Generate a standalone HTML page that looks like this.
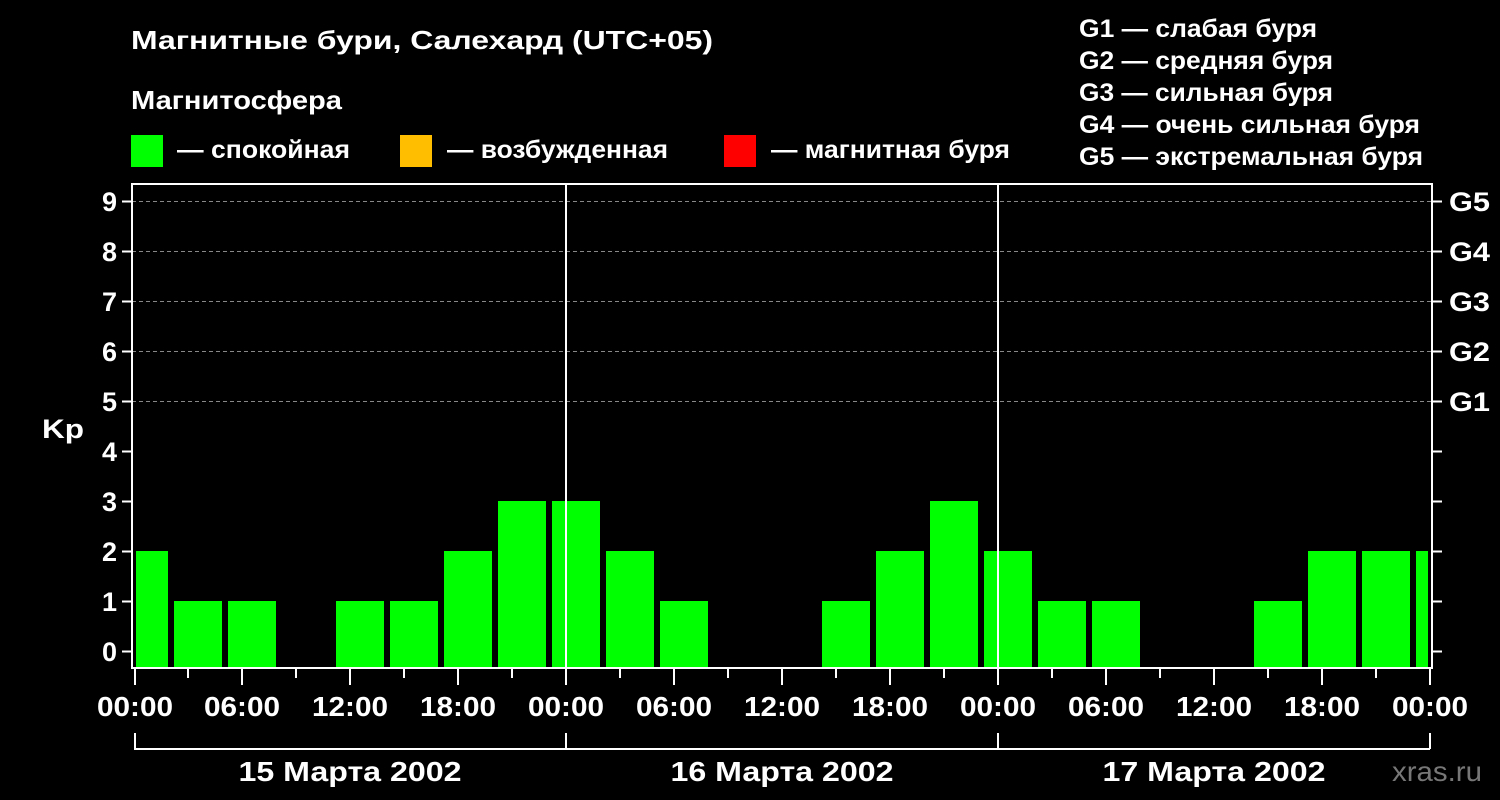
<!DOCTYPE html>
<html><head><meta charset="utf-8"><style>
html,body{margin:0;padding:0;background:#000;width:1500px;height:800px;overflow:hidden}
svg text{font-family:"Liberation Sans",Arial,sans-serif;font-weight:bold;fill:#fff}
</style></head><body>
<svg width="1500" height="800" viewBox="0 0 1500 800" xmlns="http://www.w3.org/2000/svg">
<rect width="1500" height="800" fill="#000"/>
<text x="131" y="49" font-size="26" textLength="582" lengthAdjust="spacingAndGlyphs">Магнитные бури, Салехард (UTC+05)</text>
<text x="131" y="109" font-size="26" textLength="211" lengthAdjust="spacingAndGlyphs">Магнитосфера</text>
<rect x="131" y="135" width="32" height="32" fill="#00ff00"/>
<text x="177" y="158" font-size="25" textLength="173" lengthAdjust="spacingAndGlyphs">— спокойная</text>
<rect x="400" y="135" width="32" height="32" fill="#ffbf00"/>
<text x="447" y="158" font-size="25" textLength="221" lengthAdjust="spacingAndGlyphs">— возбужденная</text>
<rect x="724" y="135" width="32" height="32" fill="#ff0000"/>
<text x="771" y="158" font-size="25" textLength="239" lengthAdjust="spacingAndGlyphs">— магнитная буря</text>
<g font-size="25">
<text x="1079" y="37" textLength="238" lengthAdjust="spacingAndGlyphs">G1 — слабая буря</text>
<text x="1079" y="69" textLength="254" lengthAdjust="spacingAndGlyphs">G2 — средняя буря</text>
<text x="1079" y="101" textLength="254" lengthAdjust="spacingAndGlyphs">G3 — сильная буря</text>
<text x="1079" y="133" textLength="341" lengthAdjust="spacingAndGlyphs">G4 — очень сильная буря</text>
<text x="1079" y="165" textLength="344" lengthAdjust="spacingAndGlyphs">G5 — экстремальная буря</text>
</g>
<g stroke="#888" stroke-width="1" stroke-dasharray="4,3">
<line x1="132" y1="201.5" x2="1432" y2="201.5"/>
<line x1="132" y1="251.5" x2="1432" y2="251.5"/>
<line x1="132" y1="301.5" x2="1432" y2="301.5"/>
<line x1="132" y1="351.5" x2="1432" y2="351.5"/>
<line x1="132" y1="401.5" x2="1432" y2="401.5"/>
</g>
<g fill="#00ff00">
<rect x="136" y="551" width="32" height="116"/>
<rect x="174" y="601" width="48" height="66"/>
<rect x="228" y="601" width="48" height="66"/>
<rect x="336" y="601" width="48" height="66"/>
<rect x="390" y="601" width="48" height="66"/>
<rect x="444" y="551" width="48" height="116"/>
<rect x="498" y="501" width="48" height="166"/>
<rect x="552" y="501" width="48" height="166"/>
<rect x="606" y="551" width="48" height="116"/>
<rect x="660" y="601" width="48" height="66"/>
<rect x="822" y="601" width="48" height="66"/>
<rect x="876" y="551" width="48" height="116"/>
<rect x="930" y="501" width="48" height="166"/>
<rect x="984" y="551" width="48" height="116"/>
<rect x="1038" y="601" width="48" height="66"/>
<rect x="1092" y="601" width="48" height="66"/>
<rect x="1254" y="601" width="48" height="66"/>
<rect x="1308" y="551" width="48" height="116"/>
<rect x="1362" y="551" width="48" height="116"/>
<rect x="1416" y="551" width="12" height="116"/>
</g>
<g stroke="#fff" stroke-width="2" fill="none">
<rect x="132" y="184" width="1300" height="484"/>
<line x1="566" y1="183" x2="566" y2="668"/>
<line x1="998" y1="183" x2="998" y2="668"/>
<path d="M122 201.5h10M122 251.5h10M122 301.5h10M122 351.5h10M122 401.5h10M122 451.5h10M122 501.5h10M122 551.5h10M122 601.5h10M122 651.5h10"/>
<path d="M1432 201.5h10M1432 251.5h10M1432 301.5h10M1432 351.5h10M1432 401.5h10M1432 451.5h10M1432 501.5h10M1432 551.5h10M1432 601.5h10M1432 651.5h10"/>
<path d="M135 669v16M188 669v9M242 669v16M296 669v9M350 669v16M404 669v9M458 669v16M512 669v9M566 669v16M620 669v9M674 669v16M728 669v9M782 669v16M836 669v9M890 669v16M944 669v9M998 669v16M1052 669v9M1106 669v16M1160 669v9M1214 669v16M1268 669v9M1322 669v16M1376 669v9M1430 669v16"/>
<path d="M135 733v16H1430M1430 733v16M566 733v16M998 733v16"/>
</g>
<g font-size="27" text-anchor="end">
<text x="117" y="211">9</text><text x="117" y="261">8</text><text x="117" y="311">7</text>
<text x="117" y="361">6</text><text x="117" y="411">5</text><text x="117" y="461">4</text>
<text x="117" y="511">3</text><text x="117" y="561">2</text><text x="117" y="611">1</text>
<text x="117" y="661">0</text>
</g>
<text x="42" y="438" font-size="27" textLength="42" lengthAdjust="spacingAndGlyphs">Kp</text>
<g font-size="27">
<text x="1449" y="211" textLength="41" lengthAdjust="spacingAndGlyphs">G5</text><text x="1449" y="261" textLength="41" lengthAdjust="spacingAndGlyphs">G4</text><text x="1449" y="311" textLength="41" lengthAdjust="spacingAndGlyphs">G3</text>
<text x="1449" y="361" textLength="41" lengthAdjust="spacingAndGlyphs">G2</text><text x="1449" y="411" textLength="41" lengthAdjust="spacingAndGlyphs">G1</text>
</g>
<g font-size="28" text-anchor="middle">
<text x="135" y="716" textLength="76" lengthAdjust="spacingAndGlyphs">00:00</text><text x="242" y="716" textLength="76" lengthAdjust="spacingAndGlyphs">06:00</text><text x="350" y="716" textLength="76" lengthAdjust="spacingAndGlyphs">12:00</text>
<text x="458" y="716" textLength="76" lengthAdjust="spacingAndGlyphs">18:00</text><text x="566" y="716" textLength="76" lengthAdjust="spacingAndGlyphs">00:00</text><text x="674" y="716" textLength="76" lengthAdjust="spacingAndGlyphs">06:00</text>
<text x="782" y="716" textLength="76" lengthAdjust="spacingAndGlyphs">12:00</text><text x="890" y="716" textLength="76" lengthAdjust="spacingAndGlyphs">18:00</text><text x="998" y="716" textLength="76" lengthAdjust="spacingAndGlyphs">00:00</text>
<text x="1106" y="716" textLength="76" lengthAdjust="spacingAndGlyphs">06:00</text><text x="1214" y="716" textLength="76" lengthAdjust="spacingAndGlyphs">12:00</text><text x="1322" y="716" textLength="76" lengthAdjust="spacingAndGlyphs">18:00</text>
<text x="1430" y="716" textLength="76" lengthAdjust="spacingAndGlyphs">00:00</text>
<text x="350" y="781" textLength="223" lengthAdjust="spacingAndGlyphs">15 Марта 2002</text>
<text x="782" y="781" textLength="223" lengthAdjust="spacingAndGlyphs">16 Марта 2002</text>
<text x="1214" y="781" textLength="223" lengthAdjust="spacingAndGlyphs">17 Марта 2002</text>
</g>
<text x="1392" y="781" font-size="28" style="fill:#777;font-weight:normal" textLength="90" lengthAdjust="spacingAndGlyphs">xras.ru</text>
</svg>
</body></html>
